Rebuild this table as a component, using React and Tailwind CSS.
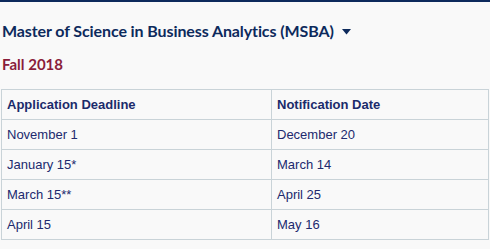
export default function App() {
  const rows = [
    ["November 1", "December 20"],
    ["January 15*", "March 14"],
    ["March 15**", "April 25"],
    ["April 15", "May 16"],
  ];
  return (
    <div className="w-[490px] h-[249px] bg-[#f9f9f9] overflow-hidden">
      <div className="h-[2px] bg-[#0d2a5c]" />
      <div className="pl-[2px] pt-[19px] flex items-center gap-[8px] text-[#0d2a5c] font-['Lato',sans-serif] font-bold text-[16px] leading-[20px] tracking-[-0.1px]">
        <span>Master of Science in Business Analytics (MSBA)</span>
        <svg width="9" height="6" viewBox="0 0 9 6" className="mt-[1px]">
          <path d="M0 0H9L4.5 5.5Z" fill="#0d2a5c" />
        </svg>
      </div>
      <div className="pl-[2px] pt-[13px] text-[#8a1d3b] font-['Lato',sans-serif] font-bold text-[15px] leading-[20px]">
        Fall 2018
      </div>
      <table className="mt-[15px] ml-px w-[488px] border-collapse font-['Liberation_Sans',Arial,sans-serif] text-[13px] text-[#212a6e]">
        <tbody>
          <tr className="h-[30px]">
            <td className="border border-[#c9d3d8] px-[5px] w-[270px] font-bold text-[#1b2b6b]">Application Deadline</td>
            <td className="border border-[#c9d3d8] px-[5px] font-bold text-[#1b2b6b]">Notification Date</td>
          </tr>
          {rows.map((r) => (
            <tr key={r[0]} className="h-[30px]">
              <td className="border border-[#c9d3d8] px-[5px]">{r[0]}</td>
              <td className="border border-[#c9d3d8] px-[5px]">{r[1]}</td>
            </tr>
          ))}
        </tbody>
      </table>
    </div>
  );
}
